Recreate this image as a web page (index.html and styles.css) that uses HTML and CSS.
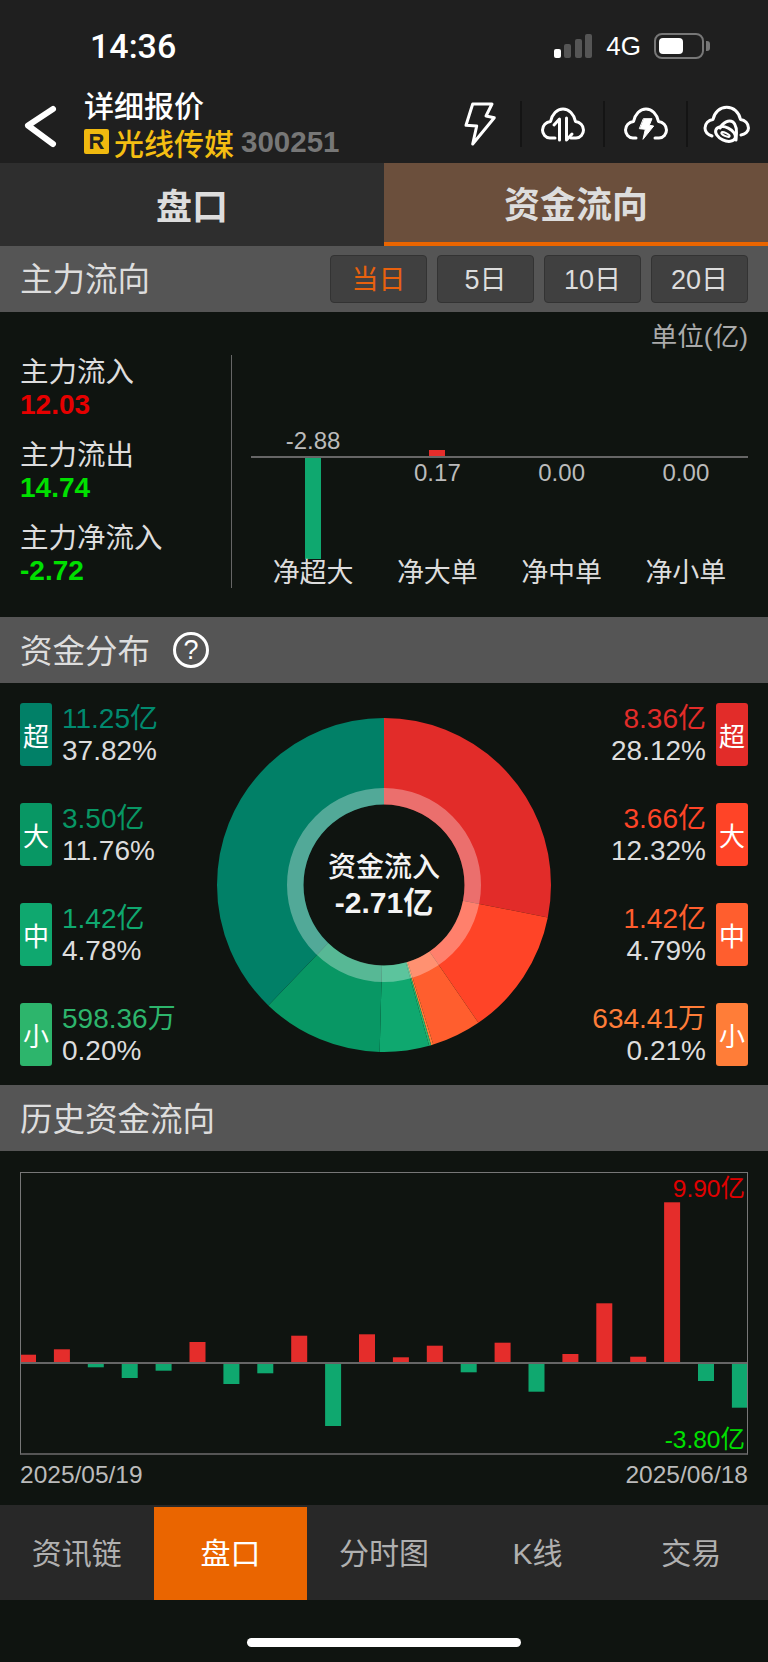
FILE: index.html
```html
<!DOCTYPE html>
<html lang="zh">
<head>
    <meta charset="UTF-8">
    <meta name="viewport" content="width=device-width, initial-scale=1.0">
    <title>详细报价</title>
    <link rel="stylesheet" href="styles.css">
</head>
<body>
    <div class="status">
        <span class="clock">14:36</span>
        <div class="status-right">
            <div class="signal"><span class="on"></span><span></span><span></span><span></span></div>
            <span class="net">4G</span>
            <div class="battery"><span></span></div>
            <div class="battery-nub"></div>
        </div>
    </div>

    <div class="topbar">
        <svg class="back" viewBox="0 0 40 48" width="40" height="48"><path d="M33 9 L8 25.5 L33 44"/></svg>
        <div class="title">
            <div class="title-top">详细报价</div>
            <div class="title-stock">
                <span class="badge-r">R</span>
                <span class="stock-name">光线传媒</span>
                <span class="stock-code">300251</span>
            </div>
        </div>
        <div class="tools">
            <div class="tool">
                <svg class="icon" viewBox="0 0 36 46" width="36" height="46"><path d="M10.7 3 H30 L24 15 L32.3 16.7 L10.7 43 L14.7 25 L4 24.3 Z"/></svg>
            </div>
            <div class="tool">
                <svg class="icon" viewBox="0 0 48 38" width="48" height="38">
                    <path d="M16 33 H11 C6.5 33 3.5 29 3.5 25 C3.5 20.5 7 17 11.5 16.5 C13 9 18 4 24 4 C30 4 35 9 36.5 16.5 C41 17 44.5 20.5 44.5 25 C44.5 29 41.5 33 37 33 H32"/>
                    <path d="M20.5 35 V14 L15 20"/>
                    <path d="M27.5 13 V35 L33 29"/>
                </svg>
            </div>
            <div class="tool">
                <svg class="icon" viewBox="0 0 48 38" width="48" height="38">
                    <path d="M14 33 H11 C6.5 33 3.5 29 3.5 25 C3.5 20.5 7 17 11.5 16.5 C13 9 18 4 24 4 C30 4 35 9 36.5 16.5 C41 17 44.5 20.5 44.5 25 C44.5 29 41.5 33 37 33 H33"/>
                    <polygon class="solid" points="21.7,13.7 30,13.7 27.3,20.3 31.7,21 21,34.3 23.3,24.3 17.7,23.7"/>
                </svg>
            </div>
            <div class="tool last">
                <svg class="icon" viewBox="0 0 50 42" width="50" height="42">
                    <path d="M10 33 C5.5 31.5 3 28.5 3 25 C3 20.5 6.5 17 11 16.5 C12.5 9 18 4.3 24.7 4.3 C31.5 4.3 37 9 38.5 16.5 C43 17 46.5 20.5 46.5 25 C46.5 28.5 43 31.5 39 32"/>
                    <path d="M18 25 C21 19 27 16.5 31 19 C34.5 21.5 35 29 34 37"/>
                    <ellipse cx="23.5" cy="31" rx="10.5" ry="6.5" transform="rotate(25 23.5 31)"/>
                    <ellipse class="thin" cx="23.5" cy="31.5" rx="4.5" ry="1.6" transform="rotate(25 23.5 31.5)"/>
                </svg>
            </div>
        </div>
    </div>

    <div class="tabs">
        <div class="tab">盘口</div>
        <div class="tab active">资金流向</div>
    </div>

    <div class="sec-head first">
        <span class="sec-title">主力流向</span>
        <div class="ranges">
            <button class="range current">当日</button>
            <button class="range">5日</button>
            <button class="range">10日</button>
            <button class="range">20日</button>
        </div>
    </div>

    <div class="flow">
        <div class="unit">单位(亿)</div>
        <div class="flow-body">
            <div class="stats">
                <div class="stat"><div class="stat-name">主力流入</div><div class="stat-num red">12.03</div></div>
                <div class="stat"><div class="stat-name">主力流出</div><div class="stat-num green">14.74</div></div>
                <div class="stat"><div class="stat-name">主力净流入</div><div class="stat-num green">-2.72</div></div>
            </div>
            <div class="net-chart">
                <div class="net-col">
                    <div class="above"><span class="net-val">-2.88</span></div>
                    <div class="below"><div class="net-bar down-bar"></div></div>
                    <div class="net-name">净超大</div>
                </div>
                <div class="net-col">
                    <div class="above"><div class="net-bar up-bar"></div></div>
                    <div class="below"><span class="net-val">0.17</span></div>
                    <div class="net-name">净大单</div>
                </div>
                <div class="net-col">
                    <div class="above"></div>
                    <div class="below"><span class="net-val">0.00</span></div>
                    <div class="net-name">净中单</div>
                </div>
                <div class="net-col">
                    <div class="above"></div>
                    <div class="below"><span class="net-val">0.00</span></div>
                    <div class="net-name">净小单</div>
                </div>
            </div>
        </div>
    </div>

    <div class="sec-head">
        <span class="sec-title">资金分布</span>
        <span class="help">?</span>
    </div>

    <div class="dist">
        <div class="dist-list">
            <div class="dist-row"><span class="tag g1">超</span><div class="dist-text"><div class="c-g1">11.25亿</div><div>37.82%</div></div></div>
            <div class="dist-row"><span class="tag g2">大</span><div class="dist-text"><div class="c-g2">3.50亿</div><div>11.76%</div></div></div>
            <div class="dist-row"><span class="tag g3">中</span><div class="dist-text"><div class="c-g3">1.42亿</div><div>4.78%</div></div></div>
            <div class="dist-row"><span class="tag g4">小</span><div class="dist-text"><div class="c-g4">598.36万</div><div>0.20%</div></div></div>
        </div>
        <div class="donut">
            <svg viewBox="0 0 334 334" width="334" height="334">
                <g transform="rotate(-90 167 167)" fill="none" stroke-width="86.5">
                    <circle cx="167" cy="167" r="123.75" pathLength="100" stroke="#e22c29" stroke-dasharray="28.12 71.88"/>
                    <circle cx="167" cy="167" r="123.75" pathLength="100" stroke="#ff4427" stroke-dasharray="12.32 87.68" stroke-dashoffset="-28.12"/>
                    <circle cx="167" cy="167" r="123.75" pathLength="100" stroke="#ff5e2e" stroke-dasharray="4.79 95.21" stroke-dashoffset="-40.44"/>
                    <circle cx="167" cy="167" r="123.75" pathLength="100" stroke="#ff7d38" stroke-dasharray="0.21 99.79" stroke-dashoffset="-45.23"/>
                    <circle cx="167" cy="167" r="123.75" pathLength="100" stroke="#2db56c" stroke-dasharray="0.20 99.80" stroke-dashoffset="-45.44"/>
                    <circle cx="167" cy="167" r="123.75" pathLength="100" stroke="#0fa86f" stroke-dasharray="4.78 95.22" stroke-dashoffset="-45.64"/>
                    <circle cx="167" cy="167" r="123.75" pathLength="100" stroke="#089764" stroke-dasharray="11.76 88.24" stroke-dashoffset="-50.42"/>
                    <circle cx="167" cy="167" r="123.75" pathLength="100" stroke="#018067" stroke-dasharray="37.82 62.18" stroke-dashoffset="-62.18"/>
                </g>
                <circle cx="167" cy="167" r="88.75" fill="none" stroke="#fff" stroke-opacity="0.32" stroke-width="16.5"/>
            </svg>
            <div class="donut-center">
                <div>资金流入</div>
                <div class="donut-num">-2.71亿</div>
            </div>
        </div>
        <div class="dist-list right">
            <div class="dist-row"><div class="dist-text"><div class="c-r1">8.36亿</div><div>28.12%</div></div><span class="tag r1">超</span></div>
            <div class="dist-row"><div class="dist-text"><div class="c-r2">3.66亿</div><div>12.32%</div></div><span class="tag r2">大</span></div>
            <div class="dist-row"><div class="dist-text"><div class="c-r3">1.42亿</div><div>4.79%</div></div><span class="tag r3">中</span></div>
            <div class="dist-row"><div class="dist-text"><div class="c-r4">634.41万</div><div>0.21%</div></div><span class="tag r4">小</span></div>
        </div>
    </div>

    <div class="sec-head">
        <span class="sec-title">历史资金流向</span>
    </div>

    <div class="history">
        <div class="hist-box">
            <svg class="hist-svg" viewBox="0 0 726 280" width="726" height="280">
                <rect class="up" x="0" y="181.7" width="15" height="7.3"/>
                <rect class="up" x="32.9" y="176.3" width="16" height="12.7"/>
                <rect class="down" x="66.8" y="191" width="16" height="3.3"/>
                <rect class="down" x="100.7" y="191" width="16" height="14"/>
                <rect class="down" x="134.6" y="191" width="16" height="6.7"/>
                <rect class="up" x="168.5" y="169" width="16" height="20"/>
                <rect class="down" x="202.4" y="191" width="16" height="20"/>
                <rect class="down" x="236.3" y="191" width="16" height="9.3"/>
                <rect class="up" x="270.2" y="162.7" width="16" height="26.3"/>
                <rect class="down" x="304.1" y="191" width="16" height="62"/>
                <rect class="up" x="338" y="161.3" width="16" height="27.7"/>
                <rect class="up" x="371.9" y="184.3" width="16" height="4.7"/>
                <rect class="up" x="405.8" y="172.7" width="16" height="16.3"/>
                <rect class="down" x="439.7" y="191" width="16" height="8.3"/>
                <rect class="up" x="473.6" y="169.7" width="16" height="19.3"/>
                <rect class="down" x="507.5" y="191" width="16" height="27.7"/>
                <rect class="up" x="541.4" y="181" width="16" height="8"/>
                <rect class="up" x="575.3" y="130.3" width="16" height="58.7"/>
                <rect class="up" x="609.2" y="183.7" width="16" height="5.3"/>
                <rect class="up" x="643.1" y="29.3" width="16" height="159.7"/>
                <rect class="down" x="677" y="191" width="16" height="17"/>
                <rect class="down" x="710.9" y="191" width="15.1" height="43.7"/>
                <rect class="zero" x="0" y="189" width="726" height="2"/>
            </svg>
            <span class="hist-max">9.90亿</span>
            <span class="hist-min">-3.80亿</span>
        </div>
        <div class="hist-dates">
            <span>2025/05/19</span>
            <span>2025/06/18</span>
        </div>
    </div>

    <div class="nav">
        <div class="nav-item">资讯链</div>
        <div class="nav-item active">盘口</div>
        <div class="nav-item">分时图</div>
        <div class="nav-item">K线</div>
        <div class="nav-item">交易</div>
    </div>

    <div class="home"><span></span></div>
</body>
</html>
```

FILE: styles.css
```css
* {
    box-sizing: border-box;
}

body {
    width: 768px;
    height: 1662px;
    margin: 0;
    overflow: hidden;
    background-color: #0f1410;
    color: #ddd;
    font-family: "Liberation Sans", "Noto Sans CJK SC", sans-serif;
}

/* status bar */
.status {
    display: flex;
    align-items: center;
    justify-content: space-between;
    height: 84px;
    padding: 8px 58px 0 90px;
    background-color: #1f1f1f;
    color: #fff;
}

.clock {
    font-family: Roboto, sans-serif;
    font-size: 34px;
    font-weight: 500;
}

.status-right {
    display: flex;
    align-items: center;
}

.signal {
    display: flex;
    align-items: flex-end;
    gap: 3.5px;
    height: 24px;
    margin-right: 14px;
}

.signal span {
    width: 7px;
    height: 24px;
    border-radius: 2px;
    background-color: #555;
}

.signal span:nth-child(1) {
    height: 9px;
    background-color: #fff;
}

.signal span:nth-child(2) {
    height: 14px;
}

.signal span:nth-child(3) {
    height: 19px;
}

.net {
    margin-right: 13px;
    font-size: 26px;
}

.battery {
    width: 50px;
    height: 26px;
    padding: 3px;
    border: 2px solid #777;
    border-radius: 8px;
}

.battery span {
    display: block;
    width: 24px;
    height: 100%;
    border-radius: 4px;
    background-color: #fff;
}

.battery-nub {
    width: 4px;
    height: 10px;
    margin-left: 2px;
    border-radius: 0 3px 3px 0;
    background-color: #777;
}

/* title row */
.topbar {
    display: flex;
    align-items: center;
    height: 79px;
    padding-left: 20px;
    background-color: #1f1f1f;
}

.back {
    fill: none;
    stroke: #fff;
    stroke-width: 6;
    stroke-linecap: round;
    stroke-linejoin: round;
}

.title {
    margin-left: 24px;
}

.title-top {
    color: #fff;
    font-size: 30px;
    font-weight: 500;
    line-height: 38px;
}

.title-stock {
    display: flex;
    align-items: center;
    height: 36px;
    margin-top: -2px;
}

.badge-r {
    display: flex;
    align-items: center;
    justify-content: center;
    width: 25px;
    height: 25px;
    border-radius: 2px;
    background-color: #f0b90f;
    color: #222;
    font-size: 22px;
    font-weight: bold;
}

.stock-name {
    margin-left: 5px;
    color: #f4be12;
    font-size: 30px;
    font-weight: 500;
}

.stock-code {
    margin-left: 7px;
    color: #777;
    font-size: 29.5px;
    font-weight: bold;
}

.tools {
    display: flex;
    align-items: center;
    margin-left: auto;
}

.tool {
    display: flex;
    align-items: center;
    justify-content: center;
    width: 83px;
    height: 46px;
    border-right: 2px solid #141414;
}

.tool.last {
    width: 80px;
    padding-right: 2px;
    border-right: 0;
}

.icon {
    fill: none;
    stroke: #fff;
    stroke-width: 3;
    stroke-linecap: round;
    stroke-linejoin: round;
}

.icon .solid {
    fill: #fff;
    stroke-width: 1;
}

.icon .thin {
    stroke-width: 2;
}

/* top tabs */
.tabs {
    display: grid;
    grid-template-columns: 1fr 1fr;
    height: 83px;
}

.tab {
    display: flex;
    align-items: center;
    justify-content: center;
    padding-bottom: 2px;
    background-color: #2e2e2e;
    font-size: 36px;
    font-weight: bold;
}

.tab.active {
    border-bottom: 4px solid #ea6500;
    background-color: #6b4f3c;
}

/* section headers */
.sec-head {
    display: flex;
    align-items: center;
    height: 66px;
    padding: 0 20px;
    background-color: #555;
}

.sec-title {
    margin-top: 3px;
    font-size: 32.5px;
    line-height: 40px;
}

.sec-head.first .sec-title {
    margin-top: 1px;
}

.help {
    display: flex;
    align-items: center;
    justify-content: center;
    width: 36px;
    height: 36px;
    margin-left: 23px;
    border: 3.5px solid #fff;
    border-radius: 50%;
    color: #fff;
    font-size: 27px;
}

.ranges {
    display: flex;
    gap: 10px;
    margin-left: auto;
}

.range {
    width: 97px;
    height: 48px;
    padding: 0 0 3px;
    border: 1px solid #333;
    border-radius: 4px;
    background-color: #404040;
    color: #ddd;
    font-family: inherit;
    font-size: 27px;
}

.range.current {
    color: #e8610e;
}

/* main flow */
.flow {
    height: 305px;
    padding: 8px 20px 0;
}

.unit {
    height: 35px;
    color: #aaa;
    font-size: 26.5px;
    line-height: 35px;
    text-align: right;
}

.flow-body {
    display: flex;
    height: 233px;
}

.stats {
    width: 212px;
    border-right: 1px solid #666;
    margin-right: 19px;
    flex-shrink: 0;
}

.stat {
    height: 83px;
    padding-top: 0.5px;
}

.stat-name {
    font-size: 28.5px;
    line-height: 32px;
}

.stat-num {
    font-size: 28px;
    font-weight: bold;
    line-height: 33px;
}

.red {
    color: #e60000;
}

.green {
    color: #00e000;
}

.net-chart {
    display: grid;
    flex: 1;
    grid-template-columns: repeat(4, 1fr);
}

.net-col {
    display: flex;
    flex-direction: column;
    align-items: center;
}

.above {
    display: flex;
    align-items: flex-end;
    justify-content: center;
    width: 100%;
    height: 103px;
    border-bottom: 2px solid #666;
}

.below {
    display: flex;
    justify-content: center;
    height: 101px;
}

.net-val {
    color: #bbb;
    font-size: 24px;
    line-height: 30px;
}

.net-bar {
    width: 16px;
}

.up-bar {
    height: 6px;
    background-color: #e52d2b;
}

.down-bar {
    height: 101px;
    background-color: #0fa86f;
}

.net-name {
    font-size: 27px;
    line-height: 29px;
}

/* distribution */
.dist {
    display: grid;
    grid-template-columns: 1fr 334px 1fr;
    height: 402px;
    padding: 20px 20px 0;
}

.dist-list {
    display: flex;
    flex-direction: column;
    gap: 37px;
}

.dist-list.right {
    align-items: flex-end;
}

.dist-row {
    display: flex;
    gap: 10px;
    height: 63px;
}

.tag {
    display: flex;
    align-items: center;
    justify-content: center;
    width: 32px;
    height: 63px;
    border-radius: 3px;
    color: #fff;
    font-size: 26px;
}

.dist-text {
    color: #ddd;
    font-size: 28px;
    line-height: 31.5px;
    white-space: nowrap;
}

.right .dist-text {
    text-align: right;
}

.g1 { background-color: #018067; }
.g2 { background-color: #089764; }
.g3 { background-color: #0fa86f; }
.g4 { background-color: #2db56c; }
.r1 { background-color: #e22c29; }
.r2 { background-color: #ff4427; }
.r3 { background-color: #ff5e2e; }
.r4 { background-color: #ff7d38; }

.c-g1 { color: #018a6f; }
.c-g2 { color: #089764; }
.c-g3 { color: #0fa86f; }
.c-g4 { color: #2db56c; }
.c-r1 { color: #e22c29; }
.c-r2 { color: #ff4427; }
.c-r3 { color: #ff5e2e; }
.c-r4 { color: #ff7d38; }

.donut {
    position: relative;
    height: 334px;
    margin-top: 15px;
}

.donut svg {
    display: block;
}

.donut-center {
    position: absolute;
    top: 132px;
    left: 0;
    width: 334px;
    color: #f4f4f4;
    font-size: 28px;
    font-weight: 500;
    line-height: 35px;
    text-align: center;
}

.donut-num {
    font-size: 30px;
    font-weight: bold;
}

/* history chart */
.history {
    height: 354px;
    padding: 21px 20px 0;
}

.hist-box {
    position: relative;
    height: 283px;
    border: 1px solid #777;
    border-bottom: 2px solid #555;
}

.hist-svg {
    display: block;
}

.up {
    fill: #e52d2b;
}

.down {
    fill: #0fa86f;
}

.zero {
    fill: #666;
}

.hist-max,
.hist-min {
    position: absolute;
    right: 2px;
    font-size: 24.5px;
    line-height: 30px;
}

.hist-max {
    top: 1px;
    color: #e00000;
}

.hist-min {
    bottom: -2px;
    color: #00e000;
}

.hist-dates {
    display: flex;
    justify-content: space-between;
    color: #bbb;
    font-size: 24.5px;
    line-height: 30px;
    margin-top: 5px;
}

/* bottom nav */
.nav {
    display: grid;
    grid-template-columns: repeat(5, 1fr);
    height: 95px;
    padding-top: 2px;
    background-color: #282828;
}

.nav-item {
    display: flex;
    align-items: center;
    justify-content: center;
    padding-bottom: 5px;
    color: #b0b0b0;
    font-size: 30px;
}

.nav-item.active {
    background-color: #ea6500;
    color: #fff;
}

.home {
    display: flex;
    justify-content: center;
    padding-top: 38px;
}

.home span {
    width: 274px;
    height: 9px;
    border-radius: 5px;
    background-color: #fff;
}
```
